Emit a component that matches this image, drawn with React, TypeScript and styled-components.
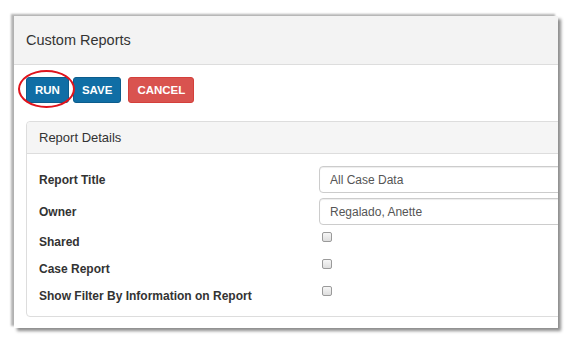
import styled, { createGlobalStyle } from 'styled-components';

const GlobalStyle = createGlobalStyle`
  html, body {
    margin: 0;
    background: #ffffff;
    font-family: "Liberation Sans", Arial, sans-serif;
  }
`;

interface Field {
  label: string
  value?: string
  check?: boolean
}

const fields: Field[] = [
  { label: 'Report Title', value: 'All Case Data' },
  { label: 'Owner', value: 'Regalado, Anette' },
  { label: 'Shared', check: true },
  { label: 'Case Report', check: true },
  { label: 'Show Filter By Information on Report', check: true },
];

function App() {
  return (
    <>
      <GlobalStyle />
      <Page>
        <Frame>
          <TopBar>Custom Reports</TopBar>
          <Toolbar>
            <RunWrap>
              <Button>RUN</Button>
              <Circle />
            </RunWrap>
            <Button>SAVE</Button>
            <Button danger>CANCEL</Button>
          </Toolbar>
          <Panel>
            <PanelHead>Report Details</PanelHead>
            <PanelBody>
              {fields.map((f) => (
                <Row key={f.label} check={f.check}>
                  <Label>{f.label}</Label>
                  {f.check ? <Check /> : <Input>{f.value}</Input>}
                </Row>
              ))}
            </PanelBody>
          </Panel>
        </Frame>
      </Page>
    </>
  );
}

export default App;

const Page = styled.div`
  width: 572px;
  height: 340px;
  padding: 16px 0 0 14px;
  box-sizing: border-box;
`;

const Frame = styled.div`
  width: 544px;
  height: 312px;
  background: #ffffff;
  overflow: hidden;
  box-shadow: 3px 3px 3px rgba(0, 0, 0, 0.45), -3px -2px 2px rgba(0, 0, 0, 0.3);
`;

const TopBar = styled.div`
  height: 48px;
  background: #f3f3f3;
  border-bottom: 1px solid #dddddd;
  padding-left: 12px;
  display: flex;
  align-items: center;
  font-size: 14.5px;
  color: #333333;
`;

const Toolbar = styled.div`
  display: flex;
  gap: 4px;
  padding: 12px 0 0 12px;
  height: 26px;
`;

const RunWrap = styled.div`
  position: relative;
  display: flex;
`;

const Circle = styled.div`
  position: absolute;
  left: -8px;
  top: -7px;
  width: 53px;
  height: 34px;
  border: 2px solid #e0141c;
  border-radius: 50%;
  pointer-events: none;
`;

const Button = styled.div<{ danger?: boolean }>`
  height: 26px;
  padding: 0 8px;
  margin-left: ${(p) => (p.danger ? '3px' : '0')};
  display: flex;
  align-items: center;
  border-radius: 3px;
  background: ${(p) => (p.danger ? '#d9534f' : '#106ea5')};
  border: 1px solid ${(p) => (p.danger ? '#d43f3a' : '#0c5c8c')};
  box-sizing: border-box;
  color: #ffffff;
  font-size: 11.5px;
  font-weight: 700;
`;

const Panel = styled.div`
  margin: 18px 0 0 12px;
  width: 560px;
  height: 196px;
  border: 1px solid #dddddd;
  border-radius: 4px;
  box-sizing: border-box;
`;

const PanelHead = styled.div`
  height: 31px;
  background: #f5f5f5;
  border-bottom: 1px solid #dddddd;
  border-radius: 4px 4px 0 0;
  padding-left: 12px;
  display: flex;
  align-items: center;
  font-size: 13px;
  color: #333333;
`;

const PanelBody = styled.div`
  padding: 12px 0 0 12px;
  display: flex;
  flex-direction: column;
`;

const Row = styled.div<{ check?: boolean }>`
  display: grid;
  grid-template-columns: 280px 1fr;
  align-items: center;
  height: 27px;
  margin-bottom: ${(p) => (p.check ? '0' : '5px')};
  &:nth-child(2) {
    margin-bottom: 3px;
  }
`;

const Label = styled.div`
  font-size: 12px;
  font-weight: 700;
  color: #333333;
`;

const Input = styled.div`
  height: 27px;
  border: 1px solid #cccccc;
  border-radius: 4px;
  box-sizing: border-box;
  padding-left: 10px;
  display: flex;
  align-items: center;
  font-size: 12px;
  color: #555555;
  box-shadow: inset 0 1px 1px rgba(0, 0, 0, 0.075);
`;

const Check = styled.span`
  align-self: start;
  width: 8px;
  height: 8px;
  margin: 4px 0 0 3px;
  border: 1px solid #9a9a9a;
  border-radius: 2px;
  background: linear-gradient(#f6f6f6, #dedede);
`;
